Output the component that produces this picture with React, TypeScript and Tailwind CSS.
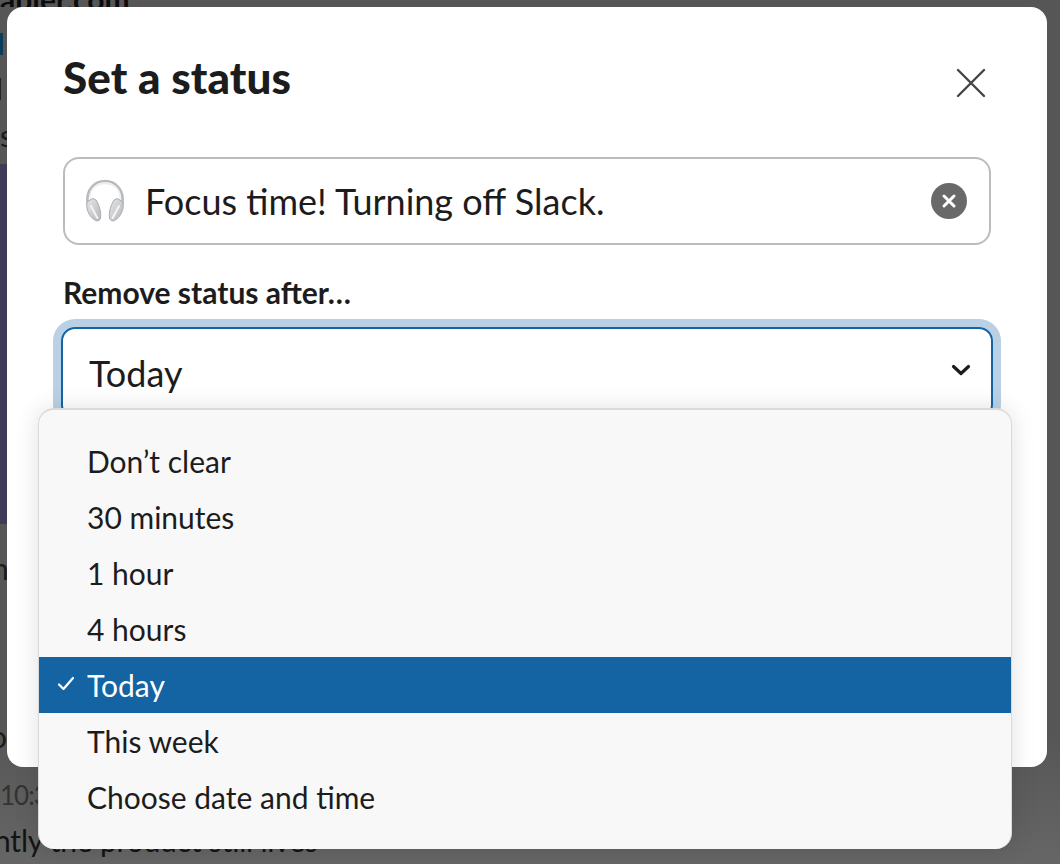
import React from "react";

const items = ["Don’t clear", "30 minutes", "1 hour", "4 hours", "Today", "This week", "Choose date and time"];

function Headphones() {
  return (
    <svg width="42" height="44" viewBox="0 0 42 44" fill="none" className="shrink-0">
      <defs>
        <linearGradient id="cup" x1="0" y1="0" x2="1" y2="1">
          <stop offset="0" stopColor="#e6e7e9" />
          <stop offset="1" stopColor="#b4b6ba" />
        </linearGradient>
      </defs>
      <path d="M3.500 24C2 10 11 2 21 2s19 8 17.500 22" stroke="#b9babd" strokeWidth="2.600" strokeLinecap="round" />
      <path d="M6 20C5.500 10 12 4.500 21 4.500S36.500 10 36 20" stroke="#eceded" strokeWidth="1.400" strokeLinecap="round" />
      <path d="M3 23c2-1.500 4-2.500 6-3.500l3 1.500c3 5 5.500 12 4.500 18-.4 2.500-3 3.500-5 2.500C6 38.500 1.500 31 3 23z" fill="url(#cup)" stroke="#a9abaf" strokeWidth="1" />
      <path d="M39 23c-2-1.500-4-2.500-6-3.500l-3 1.500c-3 5-5.500 12-4.500 18 .4 2.500 3 3.500 5 2.500C36 38.500 40.500 31 39 23z" fill="url(#cup)" stroke="#a9abaf" strokeWidth="1" />
      <path d="M7 27c2 4 4 8 6.500 12" stroke="#f4f4f5" strokeWidth="2" strokeLinecap="round" />
      <path d="M35 27c-2 4-4 8-6.500 12" stroke="#f4f4f5" strokeWidth="2" strokeLinecap="round" />
    </svg>
  );
}

export default function App() {
  return (
    <div className="relative h-[864px] w-[1060px] overflow-hidden bg-[linear-gradient(to_bottom,#565656,#565656_85%,#666666)] font-['Lato','Liberation_Sans',sans-serif] text-[#1d1c1d]">
      {/* dimmed page behind the dialog */}
      <div className="flex h-full flex-col text-[30px] leading-[40px] text-[#161616]">
        <div className="h-[7px] shrink-0 overflow-hidden font-bold leading-[0px] text-[#0c0c0c]">
          <span className="relative top-[-1px] whitespace-nowrap">apier.com</span>
        </div>
        <div className="mt-[26px] h-[22px] w-[3px] shrink-0 bg-[#0c3c5c]" />
        <div className="mt-[23px] h-[22px] w-[1px] shrink-0 bg-[#222222]" />
        <div className="mt-[20px] h-[30px] shrink-0 overflow-hidden leading-[30px] text-[#1a1a1a]">s</div>
        <div className="mt-[14px] h-[360px] w-[7px] shrink-0 bg-[#3f3a57]" />
        <div className="mt-[24px] h-[40px] shrink-0 -ml-[8px] leading-[40px] text-[#1a1a1a]">h</div>
        <div className="mt-[128px] h-[40px] shrink-0 -ml-[10px] text-[#1a1a1a]">o</div>
        <div className="mt-[21px] h-[36px] shrink-0 text-[26px] leading-[36px] tracking-[-1px] text-[#333333]">10:3</div>
        <div className="mt-[7px] shrink-0 -ml-[6px] whitespace-nowrap leading-[40px] tracking-[-0.2px] text-[#141414]">ntly the product still lives</div>
      </div>

      {/* dialog */}
      <div className="absolute left-[7px] top-[7px] h-[760px] w-[1040px] rounded-[16px] bg-white px-[56px]">
        <div className="flex h-[150px] items-start justify-between">
          <h1 className="mt-[43px] text-[44px] font-black leading-[54px] tracking-[0.1px] text-[#1d1c1d]">Set a status</h1>
          <svg width="32" height="32" viewBox="0 0 32 32" className="mt-[60px] mr-[4px] text-[#454545]" fill="none" stroke="currentColor" strokeWidth="2.400" strokeLinecap="round">
            <path d="M3 3l26 26M29 3L3 29" />
          </svg>
        </div>

        <div className="flex h-[88px] w-[928px] items-center rounded-[16px] border-2 border-[#bcbcbc] pl-[19px] pr-[22px]">
          <Headphones />
          <span className="ml-[19px] text-[36px] leading-[48px] text-[#1d1c1d]">Focus time! Turning off Slack.</span>
          <span className="ml-auto flex h-[36px] w-[36px] items-center justify-center rounded-full bg-[#696969]">
            <svg width="16" height="16" viewBox="0 0 16 16" fill="none" stroke="white" strokeWidth="3" strokeLinecap="round">
              <path d="M3 3l10 10M13 3L3 13" />
            </svg>
          </span>
        </div>

        <div className="mt-[27px] text-[30px] font-bold leading-[40px] text-[#1d1c1d]">Remove status after…</div>

        <div className="mt-[15px] -ml-[2px] flex h-[92px] w-[932px] items-center justify-between rounded-[14px] border-2 border-[#1264a3] pl-[26px] pr-[20px] shadow-[0_0_0_8px_#bad0e5]">
          <span className="text-[36px] leading-[48px] text-[#1d1c1d]">Today</span>
          <svg width="20" height="14" viewBox="0 0 20 14" fill="none" stroke="#1d1c1d" strokeWidth="3.200" strokeLinecap="round" strokeLinejoin="round" className="relative -top-[3px]">
            <path d="M2.500 3.500L10 10.500l7.500-7" />
          </svg>
        </div>
      </div>

      {/* open menu */}
      <div className="absolute left-[38px] top-[408px] h-[441px] w-[974px] rounded-[16px] border-x border-t-2 border-[#dadada] bg-[#f8f8f8] py-[23px] shadow-[0_0_24px_rgba(0,0,0,0.12)]">
        {items.map((item) => {
          const active = item === "Today";
          return (
            <div
              key={item}
              className={active
                ? "relative flex h-[56px] items-center bg-[#1464a4] pl-[48px] text-[30px] leading-[40px] text-white"
                : "flex h-[56px] items-center pl-[48px] text-[30px] leading-[40px] text-[#1d1c1d]"}
            >
              {active && (
                <svg width="18" height="16" viewBox="0 0 18 16" fill="none" stroke="white" strokeWidth="2.200" strokeLinecap="round" strokeLinejoin="round" className="absolute left-[18px] top-[19px]">
                  <path d="M2 8.500L6.500 13 16 2" />
                </svg>
              )}
              <span>{item}</span>
            </div>
          );
        })}
      </div>
    </div>
  );
}
